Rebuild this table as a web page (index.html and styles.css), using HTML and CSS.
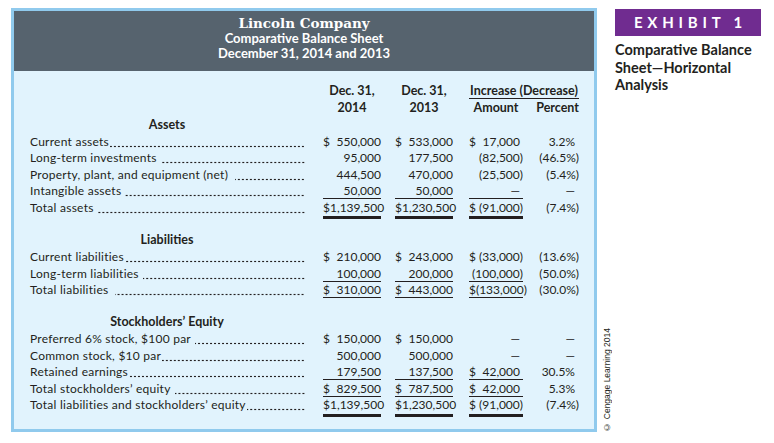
FILE: index.html
```html
<!DOCTYPE html>
<html>
<head>
<meta charset="utf-8">
<link rel="stylesheet" href="styles.css">
</head>
<body>
<div class="page">
  <div class="box">
    <div class="band">
      <div class="co">Lincoln Company</div>
      <div class="sub">Comparative Balance Sheet</div>
      <div class="sub">December 31, 2014 and 2013</div>
    </div>
    <div class="body">
      <div class="row hrow">
        <div></div>
        <div class="hc">Dec. 31,</div>
        <div class="hc">Dec. 31,</div>
        <div class="hinc">Increase (Decrease)</div>
      </div>
      <div class="row hrow">
        <div></div>
        <div class="hc">2014</div>
        <div class="hc">2013</div>
        <div class="hc3">Amount</div>
        <div class="hc4">Percent</div>
      </div>

      <div class="row sec"><div class="sech">Assets</div></div>
      <div class="row">
        <div class="lab"><span class="t">Current assets</span><span class="dots"></span></div>
        <div class="a1"><span>$</span><span class="n">550,000</span></div>
        <div class="a1"><span>$</span><span class="n">533,000</span></div>
        <div class="a3 np"><span>$</span><span class="n">17,000</span></div>
        <div class="pc np">3.2%</div>
      </div>
      <div class="row">
        <div class="lab"><span class="t">Long-term investments</span><span class="dots gap"></span></div>
        <div class="a1"><span class="n">95,000</span></div>
        <div class="a1"><span class="n">177,500</span></div>
        <div class="a3"><span class="n">(82,500)</span></div>
        <div class="pc">(46.5%)</div>
      </div>
      <div class="row">
        <div class="lab"><span class="t">Property, plant, and equipment (net)</span><span class="dots gap2"></span></div>
        <div class="a1"><span class="n">444,500</span></div>
        <div class="a1"><span class="n">470,000</span></div>
        <div class="a3"><span class="n">(25,500)</span></div>
        <div class="pc">(5.4%)</div>
      </div>
      <div class="row">
        <div class="lab"><span class="t">Intangible assets</span><span class="dots gap"></span></div>
        <div class="a1 ul"><span class="n">50,000</span></div>
        <div class="a1 ul"><span class="n">50,000</span></div>
        <div class="a3 np ul"><span class="n">—</span></div>
        <div class="pc dash">—</div>
      </div>
      <div class="row">
        <div class="lab"><span class="t">Total assets</span><span class="dots gap"></span></div>
        <div class="a1 dbl"><span class="n">$1,139,500</span></div>
        <div class="a1 dbl"><span class="n">$1,230,500</span></div>
        <div class="a3 dbl"><span>$</span><span class="n">(91,000)</span></div>
        <div class="pc">(7.4%)</div>
      </div>

      <div class="spacer1"></div>
      <div class="row sec"><div class="sech">Liabilities</div></div>
      <div class="row">
        <div class="lab"><span class="t">Current liabilities</span><span class="dots"></span></div>
        <div class="a1"><span>$</span><span class="n">210,000</span></div>
        <div class="a1"><span>$</span><span class="n">243,000</span></div>
        <div class="a3"><span>$</span><span class="n">(33,000)</span></div>
        <div class="pc">(13.6%)</div>
      </div>
      <div class="row">
        <div class="lab"><span class="t">Long-term liabilities</span><span class="dots gap"></span></div>
        <div class="a1 ul"><span class="n">100,000</span></div>
        <div class="a1 ul"><span class="n">200,000</span></div>
        <div class="a3 ul"><span class="n">(100,000)</span></div>
        <div class="pc">(50.0%)</div>
      </div>
      <div class="row">
        <div class="lab"><span class="t">Total liabilities</span><span class="dots gap2"></span></div>
        <div class="a1 ul"><span>$</span><span class="n">310,000</span></div>
        <div class="a1 ul"><span>$</span><span class="n">443,000</span></div>
        <div class="a3 ul"><span class="n">$(133,000)</span></div>
        <div class="pc">(30.0%)</div>
      </div>

      <div class="spacer2"></div>
      <div class="row sec"><div class="sech">Stockholders’ Equity</div></div>
      <div class="row">
        <div class="lab"><span class="t">Preferred 6% stock, $100 par</span><span class="dots gap"></span></div>
        <div class="a1"><span>$</span><span class="n">150,000</span></div>
        <div class="a1"><span>$</span><span class="n">150,000</span></div>
        <div class="a3 np"><span class="n">—</span></div>
        <div class="pc dash">—</div>
      </div>
      <div class="row">
        <div class="lab"><span class="t">Common stock, $10 par</span><span class="dots"></span></div>
        <div class="a1"><span class="n">500,000</span></div>
        <div class="a1"><span class="n">500,000</span></div>
        <div class="a3 np"><span class="n">—</span></div>
        <div class="pc dash">—</div>
      </div>
      <div class="row">
        <div class="lab"><span class="t">Retained earnings</span><span class="dots"></span></div>
        <div class="a1 ul"><span class="n">179,500</span></div>
        <div class="a1 ul"><span class="n">137,500</span></div>
        <div class="a3 np ul"><span>$</span><span class="n">42,000</span></div>
        <div class="pc np">30.5%</div>
      </div>
      <div class="row">
        <div class="lab"><span class="t">Total stockholders’ equity</span><span class="dots gap"></span></div>
        <div class="a1 ul"><span>$</span><span class="n">829,500</span></div>
        <div class="a1 ul"><span>$</span><span class="n">787,500</span></div>
        <div class="a3 np ul"><span>$</span><span class="n">42,000</span></div>
        <div class="pc np">5.3%</div>
      </div>
      <div class="row">
        <div class="lab"><span class="t">Total liabilities and stockholders’ equity</span><span class="dots"></span></div>
        <div class="a1 dbl"><span class="n">$1,139,500</span></div>
        <div class="a1 dbl"><span class="n">$1,230,500</span></div>
        <div class="a3 dbl"><span>$</span><span class="n">(91,000)</span></div>
        <div class="pc">(7.4%)</div>
      </div>
    </div>
  </div>
  <div class="copy">© Cengage Learning 2014</div>
  <div class="side">
    <div class="badge">EXHIBIT 1</div>
    <div class="cap">Comparative Balance Sheet—Horizontal Analysis</div>
  </div>
</div>
</body>
</html>
```
FILE: styles.css
```css
html, body {
  margin: 0;
  padding: 0;
  background: #ffffff;
}
body {
  font-family: Lato, "Open Sans", sans-serif;
  color: #231f20;
}
.page {
  display: flex;
  align-items: flex-start;
  height: 443px;
  width: 774px;
}
.box {
  margin: 8px 0 0 11px;
  width: 580px;
  border: 3px solid #90caed;
  background: #e1f3fd;
}
.band {
  background: #56636e;
  color: #ffffff;
  height: 60px;
  box-sizing: border-box;
  padding-top: 4.5px;
  text-align: center;
}
.co {
  font-family: "DejaVu Serif", serif;
  font-weight: bold;
  font-size: 13.5px;
  line-height: 15px;
}
.sub {
  font-weight: bold;
  font-size: 13px;
  line-height: 15px;
}
.body {
  padding: 10.5px 15px 15.5px 16px;
  font-size: 12px;
}
.row {
  display: grid;
  grid-template-columns: 280px 71px 72px 70px 56px;
  height: 16.5px;
  line-height: 16.5px;
  white-space: nowrap;
}
.hrow {
  height: 17px;
  line-height: 17px;
  font-weight: bold;
  font-size: 12.5px;
}
.hc {
  justify-self: end;
  width: 58px;
  text-align: center;
}
.hc3 {
  justify-self: end;
  width: 54px;
  text-align: center;
}
.hc4 {
  text-align: right;
}
.hinc {
  grid-column: 4 / 6;
  justify-self: end;
  width: 110px;
  text-align: center;
  border-bottom: 1px solid #231f20;
  box-sizing: border-box;
  height: 17px;
  white-space: nowrap;
}
.sec {
  height: 18px;
  line-height: 18px;
}
.sech {
  grid-column: 1 / 2;
  padding-right: 6px;
  text-align: center;
  font-weight: bold;
  font-size: 12.5px;
}
.spacer1 { height: 15px; }
.spacer2 { height: 14.5px; }
.lab {
  display: flex;
  padding-right: 5px;
}
.t {
  letter-spacing: 0.25px;
  flex: none;
}
.dots {
  flex: 1;
  margin-left: 1px;
  background-image: radial-gradient(circle at center, #231f20 0.75px, rgba(35, 31, 32, 0) 1.15px);
  background-size: 4px 3px;
  background-repeat: repeat-x;
  background-position: right 0 top 11px;
}
.dots.gap { margin-left: 4px; }
.dots.gap2 { margin-left: 7px; }
.a1, .a3 {
  display: flex;
  justify-self: end;
  height: 16.5px;
  box-sizing: border-box;
}
.a1 { width: 58px; }
.a3 { width: 54px; }
.n { margin-left: auto; }
.np { padding-right: 3px; }
.pc {
  text-align: right;
}
.pc.np, .pc.dash { padding-right: 4px; }
.ul {
  height: 16px;
  border-bottom: 1px solid #231f20;
}
.dbl {
  height: 19.5px;
  border-bottom: 3px solid #231f20;
}
.copy {
  align-self: flex-end;
  margin: 0 0 11px 5px;
  writing-mode: vertical-rl;
  transform: rotate(180deg);
  font-family: "Liberation Sans", Arial, sans-serif;
  font-size: 8.5px;
  line-height: 10px;
  color: #231f20;
}
.side {
  margin: 9px 0 0 3px;
  width: 146px;
}
.badge {
  background: #702c90;
  color: #ffffff;
  height: 27px;
  line-height: 27px;
  text-align: center;
  font-weight: bold;
  font-size: 15px;
  letter-spacing: 4.8px;
  padding-left: 5px;
  box-sizing: border-box;
}
.cap {
  margin-top: 5px;
  font-weight: bold;
  font-size: 14.5px;
  line-height: 17.5px;
}
```
